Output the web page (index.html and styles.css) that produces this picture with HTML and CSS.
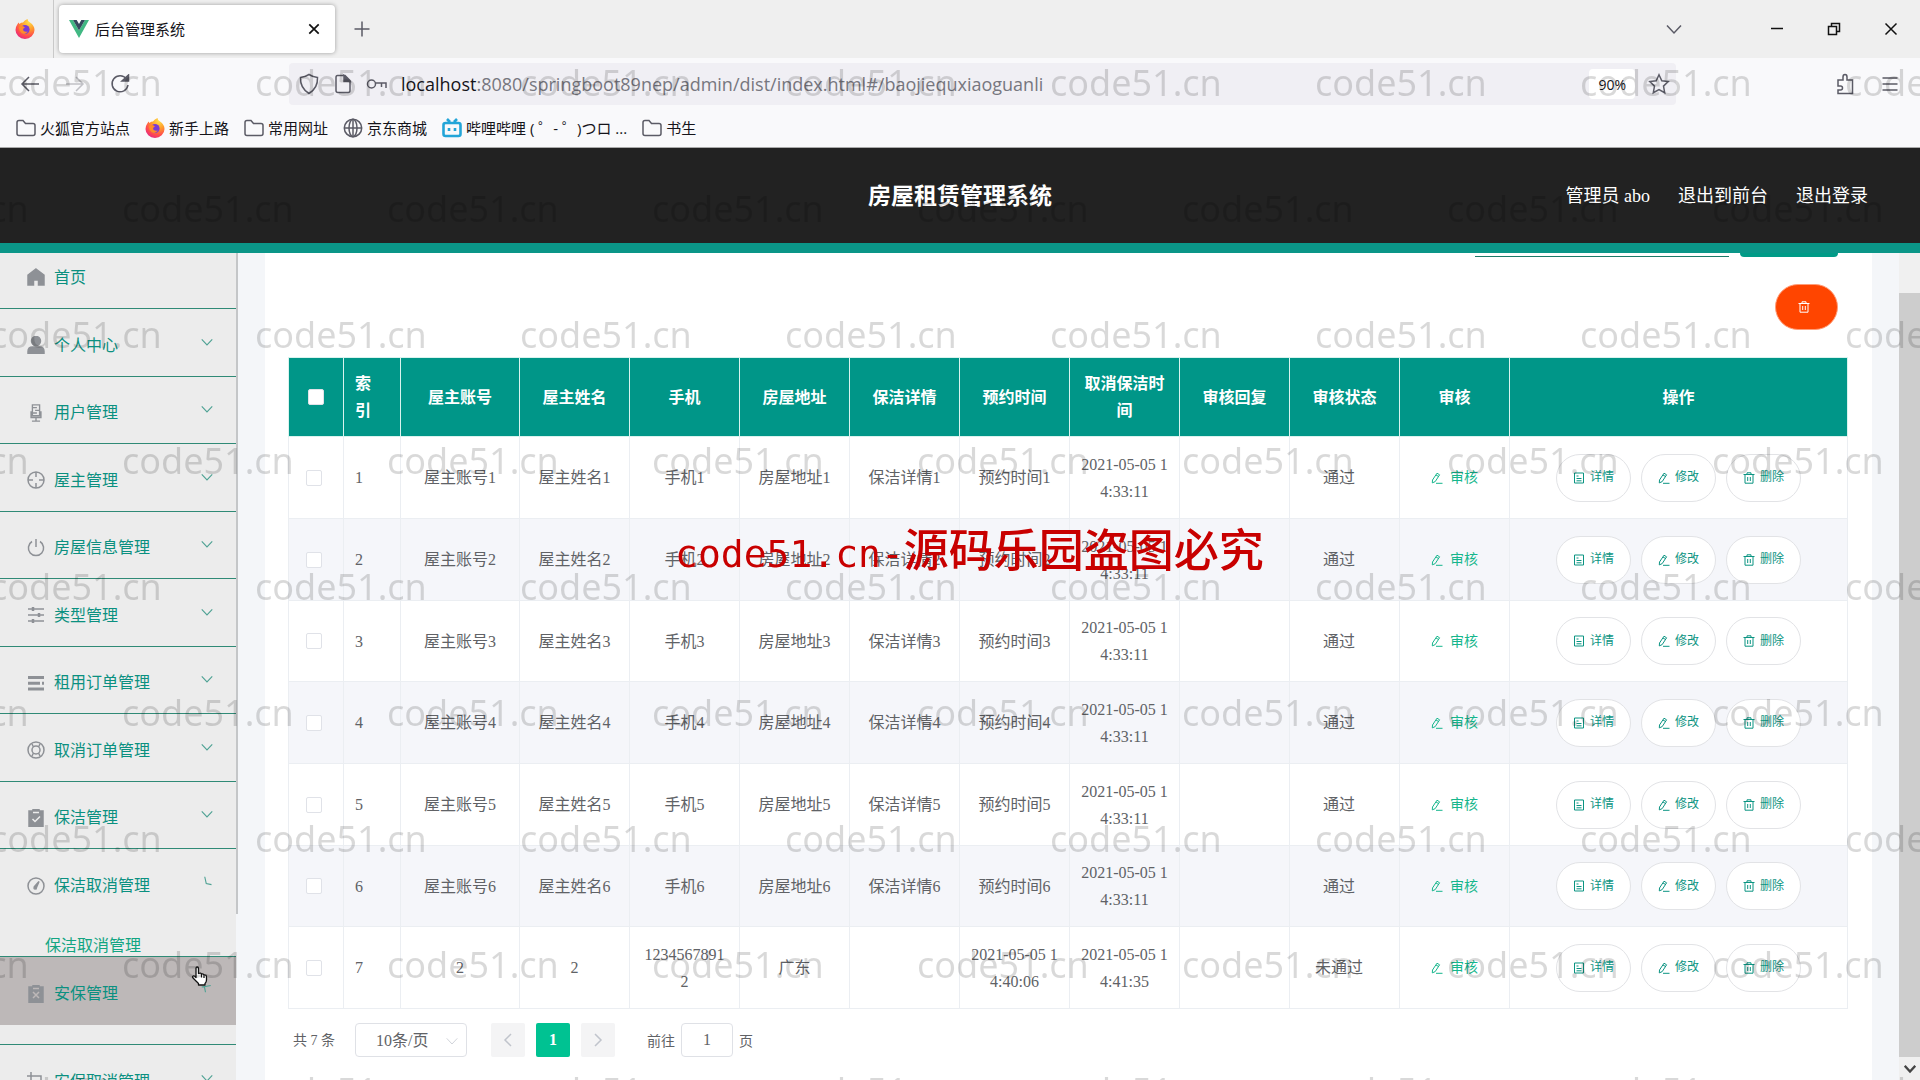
FILE: index.html
```html
<!DOCTYPE html>
<html lang="zh-CN">
<head>
<meta charset="utf-8">
<title>后台管理系统</title>
<link rel="stylesheet" href="styles.css">
</head>
<body>
<svg class="sprite" aria-hidden="true">
  <defs>
    <radialGradient id="fox-fill" cx="70%" cy="15%" r="95%"><stop offset="0" stop-color="#ffe04a"/><stop offset=".4" stop-color="#ff9a2b"/><stop offset=".75" stop-color="#ff4a4f"/><stop offset="1" stop-color="#e0248a"/></radialGradient>
  </defs>
  <symbol id="firefox" viewBox="0 0 20 20"><path fill="url(#fox-fill)" d="M2 6 3.5 3.5 4.5 5Q6 3.6 8 3.6 9.500 1 12.500 0 12.500 2 15 3.500 19.500 6.500 19.500 11A9.500 9 0 0 1 .5 11Q.5 8 2 6Z"/><circle cx="10" cy="10.500" r="4.600" fill="#7a3ad6"/><path fill="#ff8a2a" d="M4 8Q7 6 10 8.500 8 9 8 11 9 13.500 13 12.500 10 16.500 6.500 14 4 12 4 8Z"/></symbol>
  <symbol id="vue" viewBox="0 0 20 18"><path fill="#41b883" d="M0 0h4l6 10.500L16 0h4L10 18Z"/><path fill="#35495e" d="M4 0h3.700L10 4l2.300-4H16L10 10.500Z"/></symbol>
  <symbol id="cross" viewBox="0 0 14 14"><path d="M1.500 1.500l11 11M12.500 1.500l-11 11"/></symbol>
  <symbol id="plus" viewBox="0 0 16 16"><path d="M8 .5v15M.5 8h15"/></symbol>
  <symbol id="down" viewBox="0 0 16 16"><path d="M1 4.500 8 12l7-7.500"/></symbol>
  <symbol id="minus" viewBox="0 0 14 14"><path d="M1 6.500h12"/></symbol>
  <symbol id="restore" viewBox="0 0 14 14"><path d="M1.500 4.500h8v8h-8zM4.500 4.500v-3h8v8h-3"/></symbol>
  <symbol id="back" viewBox="0 0 20 20"><path d="M19 10H2M9 3l-7 7 7 7"/></symbol>
  <symbol id="forward" viewBox="0 0 20 20"><path d="M1 10h17M11 3l7 7-7 7"/></symbol>
  <symbol id="reload" viewBox="0 0 20 20"><path d="M16.500 5A8 8 0 1 0 18 11"/><path fill="currentColor" d="M12 7h6.500V1Z"/></symbol>
  <symbol id="shield" viewBox="0 0 20 22"><path d="M10 1.500Q14 4 18.500 4.500 19 15 10 20.500 1 15 1.500 4.500 6 4 10 1.500Z"/></symbol>
  <symbol id="page" viewBox="0 0 18 20"><path d="M3.500 1.500H11l5 5v10q0 2-2 2H4q-2 0-2-2V3.500q0-2 1.500-2Z"/><path fill="currentColor" d="M10 1.500v6h6Z"/></symbol>
  <symbol id="key" viewBox="0 0 22 14"><circle cx="5.500" cy="7" r="4"/><path d="M9.500 6H20v5M15.500 6v4"/></symbol>
  <symbol id="star" viewBox="0 0 22 22"><path d="M11 1.800l2.800 5.900 6.400.9-4.700 4.500 1.200 6.600L11 16.500l-5.700 3.200 1.200-6.600L1.800 8.600l6.400-.9Z"/></symbol>
  <symbol id="puzzle" viewBox="0 0 18 22"><path d="M2 7h5V4q0-2.500 2-2.500T11 4v3h5.500v13.500H2V17h2.500q2 0 2-2t-2-2H2Z"/></symbol>
  <symbol id="lines" viewBox="0 0 16 16"><path d="M.5 2h15M.5 8h15M.5 14h15"/></symbol>
  <symbol id="folder" viewBox="0 0 20 18"><path d="M1 14.500v-11Q1 1.500 3 1.500h4l2.500 3H17q2 0 2 2v8q0 2-2 2H3q-2 0-2-2Z"/></symbol>
  <symbol id="globe" viewBox="0 0 20 20"><circle cx="10" cy="10" r="8.700"/><ellipse cx="10" cy="10" rx="4" ry="8.700"/><path d="M1.500 10h17M10 1.500v17"/></symbol>
  <symbol id="bili" viewBox="0 0 20 20"><path stroke="#23a5d8" stroke-width="2.600" d="M5 1l3 3M15 1l-3 3M3.500 5h13q2 0 2 2v9q0 2-2 2h-13q-2 0-2-2V7q0-2 2-2ZM7 10v3M13 10v3"/></symbol>

  <symbol id="home" viewBox="0 0 18 18"><path fill="currentColor" d="M9 1l8 6v10h-5.500v-5h-5v5H1V7Z"/></symbol>
  <symbol id="user" viewBox="0 0 18 18"><circle cx="9" cy="5" r="4.500" fill="currentColor"/><path fill="currentColor" d="M1 18v-2.500Q1 11 5.500 11h7q4.500 0 4.500 4.500V18Z"/></symbol>
  <symbol id="mic" viewBox="0 0 18 20"><path d="M5 1h8v12H5zM3.500 8v7h11V8M9 15v4M4.500 19h9M5 4h5M8 7h5M5 10h5"/></symbol>
  <symbol id="aim" viewBox="0 0 18 18"><circle cx="9" cy="9" r="8"/><path d="M9 1v5M9 12v5M1 9h5M12 9h5"/></symbol>
  <symbol id="power" viewBox="0 0 18 18"><path d="M5 2.500a7.600 7.600 0 1 0 8 0M9 0v8"/></symbol>
  <symbol id="sliders" viewBox="0 0 18 18"><path d="M1 3h16M1 9h16M1 15h16"/><path stroke-width="2.500" d="M6 1v4M12 7v4M6 13v4"/></symbol>
  <symbol id="bars" viewBox="0 0 18 18"><path stroke-width="3" d="M1 3.500h16M1 15h16M1 9.300h12M15 9.300h2"/></symbol>
  <symbol id="ring" viewBox="0 0 18 18"><circle cx="9" cy="9" r="8"/><circle cx="9" cy="9" r="4"/><path d="M5 3l1.500 3M13 3l-1.500 3M5 15l1.500-3M13 15l-1.500-3"/></symbol>
  <symbol id="clip-ok" viewBox="0 0 18 18"><path fill="currentColor" d="M2 2h4V0h6v2h4v16H2Z"/><path stroke="#ececec" d="M5.500 10l2.500 2.500 5-5M6 3.500h6"/></symbol>
  <symbol id="clip-no" viewBox="0 0 18 18"><path fill="currentColor" d="M2 2h4V0h6v2h4v16H2Z"/><path stroke="#bdb8b8" d="M6 7l6 6M12 7l-6 6M6 3.500h6"/></symbol>
  <symbol id="gauge" viewBox="0 0 18 18"><circle cx="9" cy="9" r="8"/><path fill="currentColor" d="M12 4.500 7.500 9.500l1.500 2Z"/><circle cx="8" cy="11" r="1"/></symbol>
  <symbol id="crop" viewBox="0 0 18 18"><path d="M0 4h14v14M4 0v14h14"/></symbol>
  <symbol id="turn-open" viewBox="0 0 16 16"><path d="M5 1l2 9 7 1.500"/></symbol>
  <symbol id="turn-close" viewBox="0 0 16 16"><path d="M6 11 4.500 3.500 13 2M1 4l3.500-.5"/></symbol>

  <symbol id="edit" viewBox="0 0 12 12"><path d="M1.500 8 6 1.200l2.600 1.600L4.200 9.600l-2.900 1.300ZM5 11.300h6.500M5 3l2.500 1.500"/></symbol>
  <symbol id="doc" viewBox="0 0 12 12"><path d="M1.500 1h9v10h-9zM3.500 4h2M3.500 6.500h5M3.500 8.800h5"/></symbol>
  <symbol id="trash" viewBox="0 0 12 12"><path d="M.5 2.500h11M4 2.500V.8h4v1.700M2 2.500v8.700h8V2.500M4.700 5v4M7.300 5v4"/></symbol>
  <symbol id="left" viewBox="0 0 16 16"><path d="M11 2 5 8l6 6"/></symbol>
  <symbol id="right" viewBox="0 0 16 16"><path d="M5 2l6 6-6 6"/></symbol>
</svg>

<div class="tabs">
  <svg class="ico i20"><use href="#firefox"/></svg>
  <span class="tabs-line"></span>
  <div class="tab">
    <svg class="ico i20"><use href="#vue"/></svg>
    <span class="tab-title">后台管理系统</span>
    <button class="bare" aria-label="关闭标签页"><svg class="ico i12 dark"><use href="#cross"/></svg></button>
  </div>
  <button class="bare" aria-label="新建标签页"><svg class="ico i16"><use href="#plus"/></svg></button>
  <div class="window-buttons">
    <button class="bare list-tabs" aria-label="列出标签页"><svg class="ico i16"><use href="#down"/></svg></button>
    <button class="bare" aria-label="最小化"><svg class="ico i14 dark"><use href="#minus"/></svg></button>
    <button class="bare" aria-label="还原"><svg class="ico i14 dark"><use href="#restore"/></svg></button>
    <button class="bare" aria-label="关闭"><svg class="ico i14 dark"><use href="#cross"/></svg></button>
  </div>
</div>

<div class="toolbar">
  <div class="nav-buttons">
    <button class="bare" aria-label="后退"><svg class="ico i20"><use href="#back"/></svg></button>
    <button class="bare faded" aria-label="前进" disabled><svg class="ico i20"><use href="#forward"/></svg></button>
    <button class="bare" aria-label="刷新"><svg class="ico i20"><use href="#reload"/></svg></button>
  </div>
  <div class="address">
    <svg class="ico i22"><use href="#shield"/></svg>
    <svg class="ico i20"><use href="#page"/></svg>
    <svg class="ico i22"><use href="#key"/></svg>
    <span class="url"><b>localhost</b>:8080/springboot89nep/admin/dist/index.html#/baojiequxiaoguanli</span>
    <button class="zoom">90%</button>
    <button class="bare" aria-label="收藏"><svg class="ico i22"><use href="#star"/></svg></button>
  </div>
  <div class="tool-buttons">
    <button class="bare" aria-label="扩展"><svg class="ico i22"><use href="#puzzle"/></svg></button>
    <button class="bare" aria-label="菜单"><svg class="ico i16"><use href="#lines"/></svg></button>
  </div>
</div>

<nav class="bookmarks" aria-label="书签">
  <a href="#"><svg class="ico i20"><use href="#folder"/></svg>火狐官方站点</a>
  <a href="#"><svg class="ico i20"><use href="#firefox"/></svg>新手上路</a>
  <a href="#"><svg class="ico i20"><use href="#folder"/></svg>常用网址</a>
  <a href="#"><svg class="ico i20"><use href="#globe"/></svg>京东商城</a>
  <a href="#"><svg class="ico i20"><use href="#bili"/></svg>哔哩哔哩 ( ゜- ゜)つロ ...</a>
  <a href="#"><svg class="ico i20"><use href="#folder"/></svg>书生</a>
</nav>

<header class="header">
  <h1>房屋租赁管理系统</h1>
  <div class="account">
    <span>管理员 abo</span>
    <a href="#">退出到前台</a>
    <a href="#">退出登录</a>
  </div>
</header>

<div class="app">
  <nav class="side" id="side" aria-label="主菜单"></nav>

  <main class="content">
    <div class="panel">
      <form class="search">
        <input type="text" class="search-box" aria-label="搜索">
        <button type="button" class="search-button" aria-label="查询"></button>
      </form>
      <div class="actions">
        <button class="delete-all" aria-label="批量删除"><svg class="ico i12"><use href="#trash"/></svg></button>
      </div>
      <table class="grid">
        <colgroup>
          <col class="c-check"><col class="c-index"><col class="c-account">
          <col class="c-data"><col class="c-data"><col class="c-data"><col class="c-data"><col class="c-data">
          <col class="c-data"><col class="c-data"><col class="c-data"><col class="c-data"><col>
        </colgroup>
        <thead>
          <tr>
            <th><input type="checkbox" aria-label="全选"></th>
            <th class="index">索引</th><th>屋主账号</th><th>屋主姓名</th><th>手机</th><th>房屋地址</th><th>保洁详情</th><th>预约时间</th><th>取消保洁时间</th><th>审核回复</th><th>审核状态</th><th>审核</th><th>操作</th>
          </tr>
        </thead>
        <tbody id="rows"></tbody>
      </table>
      <div class="pager">
        <span class="total">共 7 条</span>
        <label class="size">
          <select aria-label="每页条数"><option>10条/页</option></select>
          <svg class="ico i12"><use href="#down"/></svg>
        </label>
        <button class="page-button step" aria-label="上一页"><svg class="ico i16"><use href="#left"/></svg></button>
        <button class="page-button current">1</button>
        <button class="page-button step" aria-label="下一页"><svg class="ico i16"><use href="#right"/></svg></button>
        <label class="jump">前往<input type="text" value="1">页</label>
      </div>
    </div>
  </main>

  <div class="scroll">
    <span class="thumb"></span>
    <svg class="ico i12 scroll-down"><use href="#down"/></svg>
  </div>
</div>

<svg class="pointer" viewBox="0 0 18 20"><path fill="#fff" stroke="#111" stroke-width="1.300" stroke-linejoin="round" d="M5 11.500V2.500Q5 1 6.200 1T7.500 2.500V7.500Q10 6.500 10.500 8 12.500 7.500 13 9 15.500 8.500 15.500 11v3q0 2-1.500 3.500V19H7.500v-1.500L2 12Q1 10.500 2.200 10T5 11.500ZM10.500 8v3.500M13 9v3"/></svg>
<div class="marks" id="marks" aria-hidden="true"></div>
<p class="notice"><span>code51.cn-</span>源码乐园盗图必究</p>
<script src="script.js"></script>
</body>
</html>
```
FILE: styles.css
```css
* { box-sizing: border-box; }

body {
  margin: 0;
  height: 100vh;
  overflow: hidden;
  display: flex;
  flex-direction: column;
  background: #f9f9fb;
  color: #606266;
  font-family: "Liberation Serif", "Noto Sans CJK SC", serif;
  font-size: 16px;
}

button, input, select { font: inherit; color: inherit; margin: 0; }
a { color: inherit; text-decoration: none; }
.sprite { position: absolute; width: 0; height: 0; }

.ico { flex: none; display: block; fill: none; stroke: currentColor; stroke-width: 1.5; }
.i12 { width: 12px; height: 12px; }
.i14 { width: 14px; height: 14px; }
.i16 { width: 16px; height: 16px; }
.i20 { width: 20px; height: 20px; }
.i22 { width: 22px; height: 22px; }
[href="#firefox"], [href="#vue"] { stroke: none; }
.bare { border: 0; padding: 0; background: none; }
.dark { color: #111; }

/* browser frame */
.tabs, .toolbar, .bookmarks {
  flex: none;
  display: flex;
  align-items: center;
  color: #5b5b66;
  font-family: "Open Sans", "Noto Sans CJK SC", sans-serif;
  font-size: 15px;
}
.tabs { height: 58px; padding-left: 15px; background: #efefef; }
.tabs-line { width: 1px; height: 100%; margin: 0 5px 0 18px; background: #c9c9c9; }
.tab {
  width: 276px;
  height: 48px;
  margin-right: 19px;
  padding: 0 15px 0 10px;
  display: flex;
  align-items: center;
  gap: 6px;
  border-radius: 4px;
  background: #fff;
  color: #15141a;
  box-shadow: 0 0 4px rgba(0, 0, 0, .35);
}
.tab-title { flex: 1; padding-bottom: 2px; }
.tab .ico.i12 { stroke-width: 2; }
.window-buttons { margin-left: auto; padding-right: 22px; display: flex; align-items: center; gap: 43px; }
.list-tabs { margin-right: 45px; }

.toolbar { height: 50px; padding: 2px 22px 0 20px; }
.nav-buttons { display: flex; gap: 25px; }
.faded { opacity: .35; }
.address {
  flex: 1;
  height: 42px;
  margin: 0 158px 0 159px;
  padding: 0 6px 0 9px;
  display: flex;
  align-items: center;
  gap: 13px;
  border-radius: 4px;
  background: #f0eff4;
}
.url { flex: 1; font-size: 18px; color: #77777f; white-space: nowrap; }
.url b { font-weight: 400; color: #15141a; }
.zoom { height: 30px; padding: 0 9px; border: 0; border-radius: 4px; background: #fff; color: #15141a; font-size: 14px; }
.tool-buttons { display: flex; align-items: center; gap: 26px; }

.bookmarks { height: 40px; padding: 0 16px; gap: 15px; border-bottom: 1px solid #aaa; color: #5b5b66; }
.bookmarks a { display: flex; align-items: center; gap: 4px; white-space: nowrap; color: #15141a; }
.bookmarks .ico { color: #5b5b66; }

/* application header */
.header {
  flex: none;
  height: 105px;
  padding: 0 52px 4px;
  display: grid;
  grid-template-columns: 1fr auto 1fr;
  align-items: center;
  background: #222;
  color: #fff;
  border-bottom: 10px solid #0b9688;
}
.header h1 { grid-column: 2; margin: 0; font-size: 23px; font-weight: 700; }
.account { justify-self: end; display: flex; gap: 28px; font-size: 18px; }

.app { flex: 1; min-height: 0; display: flex; overflow: hidden; }

/* side menu */
.side { flex: none; width: 238px; position: relative; overflow: hidden; background: #f4f6f9; color: #0b9080; }
.side::after {
  content: "";
  position: absolute;
  top: 0;
  right: 0;
  width: 2px;
  height: 661px;
  background: #c4c6c8;
}
.menu-item {
  height: 67px;
  margin-right: 2px;
  padding: 2px 23px 0 27px;
  display: flex;
  align-items: center;
  gap: 9px;
  border-bottom: 1px solid #2f8a76;
  background: #ececec;
}
.menu-item:nth-child(even) { height: 68px; }
.menu-item.first { height: 56px; padding-bottom: 12px; }
.menu-item.open { border-bottom: 0; }
.menu-item.hover { background: #bdb8b8; border-bottom: 0; }
.menu-item .ico { width: 18px; height: 18px; margin-top: 3px; color: #8e9196; }
.menu-item .label { flex: 1; }
.menu-item .arrow { width: 12px; height: 12px; margin: 0 0 4px; color: #4fa294; }
.submenu { height: 40px; margin-right: 2px; padding: 17px 0 0 45px; line-height: 24px; border-bottom: 1px solid #2f8a76; background: #ececec; color: #12a582; }
.menu-gap { height: 20px; margin-right: 2px; border-bottom: 1px solid #2f8a76; background: #ececec; }

/* content */
.content { flex: 1; min-width: 0; padding: 0 27px; background: #f4f6f9; }
.panel { height: 100%; padding: 0 24px 0 23px; background: #fff; }
.search { display: flex; justify-content: flex-end; gap: 11px; height: 4px; padding-right: 10px; align-items: flex-end; overflow: hidden; }
.search-box { width: 254px; height: 36px; border: 0; border-bottom: 1px solid #1d7a68; background: transparent; }
.search-button { width: 98px; height: 36px; border: 0; border-radius: 4px; background: #009b87; }
.actions { display: flex; justify-content: flex-end; padding: 27px 10px 27px 0; }
.delete-all {
  width: 63px;
  height: 46px;
  display: flex;
  align-items: center;
  justify-content: center;
  padding: 0 6px 0 0;
  border: 1px solid #ff9d78;
  border-radius: 23px;
  background: #ff4500;
  color: #fff;
}

.grid { width: 100%; table-layout: fixed; border-collapse: collapse; border: 1px solid #ebeef2; }
.c-check { width: 55px; }
.c-index { width: 57px; }
.c-account { width: 119px; }
.c-data { width: 110px; }
.grid th, .grid td {
  padding: 0 11px;
  border: 1px solid #ebeef2;
  line-height: 27px;
  text-align: center;
  word-break: break-all;
}
.grid th { height: 79px; border-color: #d9f3ee; background: #009688; color: #fff; font-weight: 700; }
.grid td { height: 82px; }
.grid tr:nth-child(3n) td { height: 81px; }
.grid tbody tr:nth-child(even) { background: #f5f6fa; }
.grid .index { padding: 0 16px 0 11px; text-align: left; }
.grid .state { padding-right: 22px; }
.grid input {
  appearance: none;
  display: block;
  width: 16px;
  height: 16px;
  margin-left: 6px;
  border: 1px solid #e0e2e8;
  border-radius: 2px;
  background: #fff;
}
.grid th input { margin-left: 8px; }
.audit { display: flex; align-items: center; gap: 7px; margin: 0 auto; padding: 0; border: 0; background: none; color: #16b68c; font-size: 14px; }
.ico.i12 { stroke-width: 1; }
.row-buttons { display: flex; justify-content: center; gap: 10px; }
.row-button {
  width: 75px;
  height: 48px;
  display: flex;
  align-items: center;
  justify-content: center;
  gap: 5px;
  padding: 0;
  border: 1px solid #e2e3e6;
  border-radius: 24px;
  background: #fff;
  color: #0b9482;
  font-size: 12px;
}

/* pager */
.pager { display: flex; align-items: center; padding: 14px 5px 0; font-size: 14px; }
.total { width: 62px; padding-bottom: 2px; }
.size { position: relative; width: 112px; margin-right: 24px; }
.size select { appearance: none; display: block; width: 112px; height: 34px; padding: 0 20px; border: 1px solid #dfe1e6; border-radius: 4px; background: #fff; font-size: 16px; }
.size .ico { position: absolute; right: 9px; top: 12px; color: #c0c4cc; }
.page-button { width: 34px; height: 34px; display: flex; align-items: center; justify-content: center; margin-right: 11px; padding: 0; border: 0; border-radius: 2px; }
.step { background: #f4f4f5; color: #c0c4cc; }
.current { background: #00c292; color: #fff; font-weight: 700; font-size: 16px; }
.jump { margin-left: 21px; display: flex; align-items: center; gap: 6px; }
.jump input { width: 52px; height: 34px; padding: 0; border: 1px solid #dfe1e6; border-radius: 4px; text-align: center; font-size: 16px; }

/* page scroll bar */
.scroll { flex: none; width: 21px; padding-top: 40px; display: flex; flex-direction: column; align-items: center; background: #f0f0f0; }
.thumb { flex: 1; width: 100%; background: #cdcdcd; }
.scroll .scroll-down { height: 23px; stroke-width: 3; color: #444; }

/* overlays */
.pointer { position: absolute; left: 191px; top: 966px; width: 18px; height: 20px; }
.marks {
  position: fixed;
  inset: 0;
  padding-top: 20px;
  overflow: hidden;
  pointer-events: none;
  color: rgba(0, 0, 0, .15);
  font: 36px/126px "Noto Sans", sans-serif;
}
.marks div { display: flex; height: 126px; margin-left: -10px; }
.marks div:nth-child(even) { margin-left: -143px; }
.marks span { flex: none; width: 265px; }
.notice {
  position: fixed;
  left: 675px;
  top: 518px;
  margin: 0;
  pointer-events: none;
  color: #c80000;
  font: 500 45px/60px "Noto Sans CJK SC", sans-serif;
  white-space: nowrap;
}
.notice span { font: 400 38px/60px "DejaVu Sans Mono", monospace; }
```
FILE: script.js
```js
const icon = (name, cls) => `<svg class="ico ${cls}"><use href="#${name}"/></svg>`;

const item = (name, label, arrow = "down", cls = "") =>
  `<a href="#" class="menu-item ${cls}">${icon(name, "")}<span class="label">${label}</span>${arrow ? icon(arrow, "arrow") : ""}</a>`;

document.getElementById("side").innerHTML = [
  item("home", "首页", "", "first"),
  item("user", "个人中心"),
  item("mic", "用户管理"),
  item("aim", "屋主管理"),
  item("power", "房屋信息管理"),
  item("sliders", "类型管理"),
  item("bars", "租用订单管理"),
  item("ring", "取消订单管理"),
  item("clip-ok", "保洁管理"),
  item("gauge", "保洁取消管理", "turn-open", "open"),
  `<a href="#"><div class="submenu">保洁取消管理</div></a>`,
  item("clip-no", "安保管理", "turn-close", "hover"),
  `<div class="menu-gap"></div>`,
  item("crop", "安保取消管理"),
].join("");

const rows = [1, 2, 3, 4, 5, 6].map(n => [
  `屋主账号${n}`, `屋主姓名${n}`, `手机${n}`, `房屋地址${n}`, `保洁详情${n}`, `预约时间${n}`, "2021-05-05 14:33:11", "", "通过",
]);
rows.push(["2", "2", "12345678912", "广东", "", "2021-05-05 14:40:06", "2021-05-05 14:41:35", "", "未通过"]);

const rowButton = (name, label) => `<button class="row-button">${icon(name, "i12")}${label}</button>`;

document.getElementById("rows").innerHTML = rows.map((cells, i) => `<tr>
  <td><input type="checkbox" aria-label="选择第${i + 1}行"></td>
  <td class="index">${i + 1}</td>
  ${cells.map((text, c) => `<td${c === 8 ? ' class="state"' : ""}>${text}</td>`).join("")}
  <td><button class="audit">${icon("edit", "i12")}审核</button></td>
  <td><div class="row-buttons">${rowButton("doc", "详情")}${rowButton("edit", "修改")}${rowButton("trash", "删除")}</div></td>
</tr>`).join("");

const line = "<div>" + "<span>code51.cn</span>".repeat(9) + "</div>";
document.getElementById("marks").innerHTML = line.repeat(9);
```
